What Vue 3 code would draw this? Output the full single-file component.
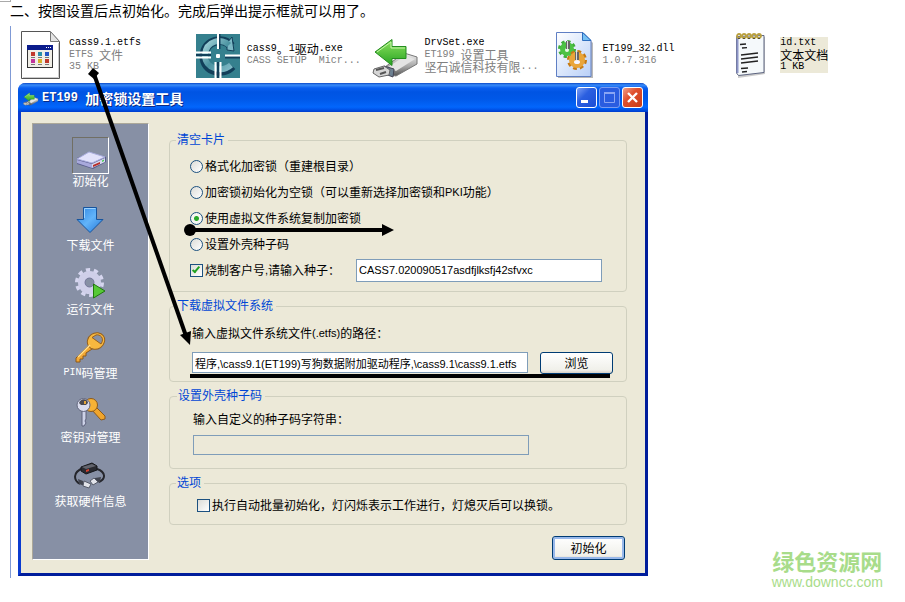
<template>
  <div class="page">
    <span class="corner"></span>
    <h1 class="step-title">二、按图设置后点初始化。完成后弹出提示框就可以用了。</h1>

    <main class="content">
      <ul class="files">
        <li v-for="file in files" :key="file.name" class="file" :class="{ selected: file.selected }">
          <svg v-if="file.icon === 'etfs'" class="file-icon" viewBox="0 0 48 48">
            <path d="M5.500 .5H34l9.500 10V47.500H5.500Z" fill="#fff" stroke="#555" />
            <path d="M34.500 .5V10.500H43.500Z" fill="#e4e4e4" stroke="#777" />
            <path d="M7 46.500H42.500V12" fill="none" stroke="#ccc" />
            <rect x="11.500" y="14.500" width="25" height="22" fill="#f0eee6" stroke="#333" />
            <rect x="11" y="14" width="26" height="5" fill="#0b1c8c" />
            <path d="M30 16.500h1m1 0h1m1 0h1" stroke="#fff" />
            <g v-for="(color, i) in dotColors" :key="i">
              <rect :x="15 + (i % 3) * 7" :y="i < 3 ? 21 : 28" width="4" height="4" :fill="color" />
              <rect :x="15 + (i % 3) * 7" :y="i < 3 ? 26 : 33" width="4" height="1" fill="#777" />
            </g>
          </svg>

          <svg v-else-if="file.icon === 'cass'" class="file-icon" viewBox="0 0 48 48">
            <defs>
              <linearGradient id="cassLetter" x1="0" y1="0" x2="1" y2="1">
                <stop offset="0" stop-color="#a4d3da" />
                <stop offset=".5" stop-color="#4b93a1" />
                <stop offset="1" stop-color="#7fbac6" />
              </linearGradient>
            </defs>
            <rect x="2" y="3" width="44" height="44" fill="#35808e" />
            <path d="M37 15C30 6 11 8 10 25C10 42 30 44 38 35" fill="none" stroke="#123f5a" stroke-width="9" />
            <path d="M33 12 38 6 40 20 33 19Z" fill="#7cb9c5" stroke="#123f5a" />
            <path d="M35 14C28 7 12 9 11 24C11 38 28 42 37 34" fill="none" stroke="url(#cassLetter)" stroke-width="6" />
            <path d="M25.500 3V18M24 31V47M2 24H17M31 26.500H46" stroke="#123f5a" stroke-width="2" />
            <path d="M24 3V18M2 21.500H17M2 26.500H17M31 24.500H46M21.500 31V47M26.500 31V47" stroke="#fff" stroke-width="2" />
            <rect x="22" y="23" width="4" height="4" rx="1" fill="#fff" />
          </svg>

          <svg v-else-if="file.icon === 'drvset'" class="file-icon" viewBox="0 0 48 48">
            <use href="#usbArrow" />
          </svg>

          <svg v-else-if="file.icon === 'dll'" class="file-icon" viewBox="0 0 48 48">
            <defs>
              <linearGradient id="dllPaper" x1="0" y1="0" x2="1" y2="1">
                <stop offset="0" stop-color="#fff" />
                <stop offset="1" stop-color="#b9d0f8" />
              </linearGradient>
            </defs>
            <path d="M9 3H35l9 9V47H9Z" fill="#8b8b8b" opacity=".6" />
            <path d="M7.500 1.500H34l8 8V45.500H7.500Z" fill="url(#dllPaper)" stroke="#5f7fc4" />
            <path d="M33.500 1.500V9.500H42Z" fill="#76c1f3" stroke="#2e6fc0" />
            <circle cx="18" cy="18" r="7" fill="none" stroke="#3fae3a" stroke-width="4" stroke-dasharray="3 2.500" />
            <circle cx="18" cy="18" r="7" fill="#4cc244" />
            <circle cx="18" cy="19" r="2" fill="#e8fbe6" />
            <circle cx="28" cy="29" r="8" fill="none" stroke="#c67a14" stroke-width="4" stroke-dasharray="3.500 2.800" />
            <circle cx="28" cy="29" r="8" fill="#e9a53a" />
            <ellipse cx="28" cy="31" rx="3" ry="2" fill="#f4f4ff" />
            <path d="M19 10V18M28 21V29" stroke="#666" stroke-width="4" />
            <path d="M18.500 10V18M27.500 21V29" stroke="#ddd" stroke-width="1" />
          </svg>

          <svg v-else class="file-icon" viewBox="0 0 48 48">
            <path d="M11 6H38V43L11 47Z" fill="#999" opacity=".5" />
            <path d="M9.500 5.500 37 4.500V41.500L11.500 44.500 9.500 42Z" fill="#f5f9fb" stroke="#5c6480" />
            <path d="M10.500 6V42" stroke="#8d95c7" stroke-width="2" />
            <path d="M13 13.500l6-.5M15 17l5-.4M14 24l17-2M14 28l17-2M14 32l17-2M14 37.500l7-.5M15 41l5-.5" stroke="#222" stroke-width="1.300" />
            <g fill="none" stroke="#b9a040" stroke-width="1.800">
              <circle v-for="n in 5" :key="n" :cx="7 + n * 5" cy="5" r="2" />
            </g>
            <path d="M12 7v1m5-1v1m5-1v1m5-1v1m5-1v1" stroke="#333" stroke-width="1.500" />
          </svg>

          <div class="file-text">
            <p v-for="(line, i) in [file.name, ...file.info]" :key="i" :class="{ info: i > 0 }">
              <MixedText :text="line" />
            </p>
          </div>
        </li>
      </ul>

      <section class="dialog">
        <header class="title-bar">
          <svg class="title-icon" viewBox="0 0 48 48"><use href="#usbArrow" /></svg>
          <h2><MixedText text="ET199 加密锁设置工具" /></h2>
          <div class="window-buttons">
            <button type="button" aria-label="最小化">
              <svg viewBox="0 0 19 19"><rect x="4" y="12" width="7" height="3" fill="#fff" /></svg>
            </button>
            <button type="button" class="maximize" aria-label="最大化" disabled>
              <svg viewBox="0 0 19 19">
                <path d="M4.500 5V14.500H14.500V5M4 5H15" fill="none" stroke="#8aa5f4" />
                <path d="M4 5H15" stroke="#8aa5f4" stroke-width="2" />
              </svg>
            </button>
            <button type="button" class="close" aria-label="关闭">
              <svg viewBox="0 0 19 19">
                <path d="M5 5 14 14M14 5 5 14" stroke="#fff" stroke-width="2.400" />
              </svg>
            </button>
          </div>
        </header>

        <div class="dialog-body">
          <nav class="sidebar">
            <button
              v-for="item in menu"
              :key="item.icon"
              type="button"
              class="menu-item"
              :class="{ active: item.icon === current }"
              @click="current = item.icon"
            >
              <span class="menu-icon">
                <svg v-if="item.icon === 'drive'" viewBox="0 0 32 32">
                  <path d="M2 18 14 13 31 17V22L18 29 2 24Z" fill="#5a5d8c" />
                  <path d="M2 19 14 12 30 17 17 23Z" fill="#e2e2fb" stroke="#aaaedf" />
                  <path d="M2 20 17 24V28L2 23Z" fill="#a8a9dc" />
                  <path d="M17 24 30 18V22L17 28Z" fill="#d7d8ee" />
                  <path d="M18 25 25 22V24L18 27Z" fill="#b92f28" />
                  <path d="M27 20.500 29 19.500V21L27 22Z" fill="#46cf51" />
                </svg>

                <svg v-else-if="item.icon === 'download'" viewBox="0 0 32 32">
                  <defs>
                    <linearGradient id="blueArrow" x1="0" y1="0" x2="1" y2="1">
                      <stop offset="0" stop-color="#2d83e0" />
                      <stop offset=".5" stop-color="#62b4fa" />
                      <stop offset="1" stop-color="#2375d6" />
                    </linearGradient>
                  </defs>
                  <path d="M9.500 3.500H22.500V15.500H29L16 28.500 3 15.500H9.500Z" fill="url(#blueArrow)" stroke="#17549d" />
                  <path d="M10.500 14V4.500H21.500" fill="none" stroke="#9cd3ff" />
                </svg>

                <svg v-else-if="item.icon === 'run'" viewBox="0 0 32 32">
                  <circle cx="15.500" cy="14.500" r="12" fill="none" stroke="#d6d6ef" stroke-width="5" stroke-dasharray="4 3.540" />
                  <circle cx="15.500" cy="14.500" r="8" fill="none" stroke="#cfcfe9" stroke-width="7" />
                  <circle cx="15.500" cy="14.500" r="4.500" fill="#8790a5" stroke="#77799d" />
                  <path d="M19.500 16V30L31 23Z" fill="#56c936" stroke="#21770f" />
                </svg>

                <svg v-else-if="item.icon === 'pin'" viewBox="0 0 32 32">
                  <path d="M16 11 1 26V30H5V27H8V24H11V21L20 15Z" fill="#f3a935" stroke="#8b591b" />
                  <ellipse cx="21" cy="9" rx="9" ry="8" transform="rotate(-35 21 9)" fill="#f8b83f" stroke="#95601e" />
                  <path d="M17 5.500 26 12C30 6 25 2 21 3Z" fill="#8790a5" stroke="#95601e" />
                  <path d="M15 13 3 25" stroke="#ffe293" stroke-width="1.500" />
                </svg>

                <svg v-else-if="item.icon === 'keys'" viewBox="0 0 32 32">
                  <path d="M17 13 27 24 31 23V20L22 11Z" fill="#f0a52c" stroke="#8b591b" />
                  <circle cx="17" cy="9" r="6.500" fill="#f6b236" stroke="#8b591b" />
                  <path d="M8 14V30H10L12 27 11 25 12 23V14Z" fill="#cdd2e8" stroke="#5d617b" />
                  <circle cx="9.500" cy="9" r="6.500" fill="#d9dced" stroke="#63677f" />
                  <path d="M5 7C7 1 14 3 14 7L12 9H7Z" fill="#4b4a50" />
                  <path d="M11 5v3" stroke="#e4a63a" stroke-width="2" />
                </svg>

                <svg v-else viewBox="0 0 32 32">
                  <path d="M9 8C-1 12-1 20 6 24M23 9C32 12 32 19 25 22" fill="none" stroke="#25262c" stroke-width="2" />
                  <path d="M7 7 18 3 23 6V10L12 14 7 11Z" fill="#292a30" stroke="#16171b" />
                  <path d="M8 7 18 4 22 6 12 9Z" fill="#62646d" />
                  <path d="M12 10 15 9V11L12 12Z" fill="#d43f2e" />
                  <path d="M4 19 9 21 11 26 5 24ZM27 17 21 18 18 24 26 22Z" fill="#41444e" />
                  <path d="M10 21 17 24 15 28 9 26ZM20 18 16 21 19 25 24 22Z" fill="#e2e4ea" stroke="#565b69" />
                </svg>
              </span>
              <span class="menu-label"><MixedText :text="item.label" /></span>
            </button>
          </nav>

          <form class="panel" @submit.prevent>
            <fieldset class="group clear-card">
              <legend>清空卡片</legend>
              <label v-for="mode in modes" :key="mode.value" class="option">
                <input v-model="selectedMode" type="radio" name="mode" :value="mode.value" />
                <MixedText :text="mode.label" />
              </label>
              <div class="option seed">
                <label class="option">
                  <input v-model="burnCustomer" type="checkbox" />
                  <MixedText text="烧制客户号,请输入种子：" />
                </label>
                <input v-model="seed" class="text-input" type="text" aria-label="种子" />
              </div>
            </fieldset>

            <fieldset class="group file-system">
              <legend>下载虚拟文件系统</legend>
              <label class="field-label" for="path"><MixedText text="输入虚拟文件系统文件(.etfs)的路径：" /></label>
              <div class="path-row">
                <input id="path" v-model="path" class="text-input" type="text" />
                <button type="button" class="xp-button">浏览</button>
              </div>
            </fieldset>

            <fieldset class="group shell-seed">
              <legend>设置外壳种子码</legend>
              <label class="field-label" for="shell">输入自定义的种子码字符串：</label>
              <input id="shell" class="text-input" type="text" disabled />
            </fieldset>

            <fieldset class="group batch">
              <legend>选项</legend>
              <label class="option">
                <input v-model="batch" type="checkbox" />
                <MixedText text="执行自动批量初始化，灯闪烁表示工作进行，灯熄灭后可以换锁。" />
              </label>
            </fieldset>

            <button type="submit" class="xp-button default">初始化</button>
          </form>
        </div>
      </section>
    </main>

    <!-- hand-drawn arrows pointing at the settings -->
    <svg class="marks" width="660" height="400" viewBox="0 0 660 400">
      <defs>
        <linearGradient id="greenArrow" x1="0" y1="0" x2="0" y2="1">
          <stop offset="0" stop-color="#8ee35f" />
          <stop offset="1" stop-color="#27a322" />
        </linearGradient>
        <linearGradient id="metal" x1="0" y1="0" x2="0" y2="1">
          <stop offset="0" stop-color="#f2f2f2" />
          <stop offset=".6" stop-color="#a4a4a4" />
          <stop offset="1" stop-color="#555" />
        </linearGradient>
        <g id="usbArrow">
          <path d="M13 36 32 22 45 26V33L24 45 14 43Z" fill="url(#metal)" stroke="#777" />
          <path d="M16 36 33 25 43 28 24 40Z" fill="#e4e4e4" />
          <path d="M12 35 22 38 21 46 13 43Z" fill="#6d8192" stroke="#445" />
          <path d="M2 38 12 35 18 39 17 44 7 46 1 42Z" fill="#d5d5d5" stroke="#666" />
          <path d="M4 39 12 37M8 43 14 41" stroke="#555" stroke-width="2" />
          <path d="M3 21 20 8.500V15.500H34V27.500H20V34.500Z" fill="url(#greenArrow)" stroke="#258d20" />
          <path d="M5 21 19 11V17H33" fill="none" stroke="#c4f5a6" />
        </g>
      </defs>
      <path d="M94 74 186 336" stroke="#000" stroke-width="4" />
      <path d="M93 68 99 73 94 79 88 74Z" />
      <path d="M190 345 180 335 191 331Z" />
      <circle cx="190" cy="230" r="6" />
      <path d="M190 230H384" stroke="#000" stroke-width="4" />
      <path d="M394 230 382 224V236Z" />
      <path d="M190 376H610" stroke="#000" stroke-width="4" />
    </svg>

    <a class="watermark" href="#">
      <strong>绿色资源网</strong>
      <span>www.downcc.com</span>
    </a>
  </div>
</template>

<script setup>
import { h, ref } from 'vue'

// Chinese glyphs are set larger than the latin ones next to them
const MixedText = (props) =>
  h('span', { class: 'mixed' }, props.text
    .split(/([\u3000-\u9fff\uff00-\uffef]+)/)
    .filter(Boolean)
    .map((run) => (/[\u3000-\uffef]/.test(run) ? h('span', { class: 'cjk' }, run) : run)))
MixedText.props = ['text']

const files = [
  { icon: 'etfs', name: 'cass9.1.etfs', info: ['ETFS 文件', '35 KB'] },
  { icon: 'cass', name: 'cass9。1驱动.exe', info: ['CASS SETUP  Micr...'] },
  { icon: 'drvset', name: 'DrvSet.exe', info: ['ET199 设置工具', '坚石诚信科技有限...'] },
  { icon: 'dll', name: 'ET199_32.dll', info: ['1.0.7.316'] },
  { icon: 'txt', name: 'id.txt', info: ['文本文档', '1 KB'], selected: true }
]

const dotColors = ['#c0392b', '#2a8fa8', '#2456c4', '#c2359b', '#d8b02a', '#c0392b']

const menu = [
  { icon: 'drive', label: '初始化' },
  { icon: 'download', label: '下载文件' },
  { icon: 'run', label: '运行文件' },
  { icon: 'pin', label: 'PIN码管理' },
  { icon: 'keys', label: '密钥对管理' },
  { icon: 'cable', label: '获取硬件信息' }
]

const modes = [
  { value: 'format', label: '格式化加密锁（重建根目录）' },
  { value: 'empty', label: '加密锁初始化为空锁（可以重新选择加密锁和PKI功能）' },
  { value: 'copy', label: '使用虚拟文件系统复制加密锁' },
  { value: 'shell', label: '设置外壳种子码' }
]

const current = ref('drive')
const selectedMode = ref('copy')
const burnCustomer = ref(true)
const batch = ref(false)
const seed = ref('CASS7.020090517asdfjlksfj42sfvxc')
const path = ref('程序,\\cass9.1(ET199)写狗数据附加驱动程序,\\cass9.1\\cass9.1.etfs')
</script>

<style>
body {
  background: #fff;
}

.mixed {
  display: flex;
  align-items: center;
  white-space: pre;
}

.mixed .cjk {
  font-family: "Noto Sans CJK SC", sans-serif;
  font-size: 12px;
}

h2 .mixed .cjk {
  font-size: 14px;
}
</style>

<style scoped>
.page {
  position: relative;
  box-sizing: border-box;
  min-height: 100vh;
  color: #000;
  font-family: "Liberation Sans", "Noto Sans CJK SC", sans-serif;
  font-size: 12px;
}

.page *,
.page *::before {
  box-sizing: border-box;
}

.corner {
  position: absolute;
  top: 0;
  left: 0;
  width: 11px;
  height: 2px;
  border-right: 1px solid #aaa;
  border-bottom: 1px solid #aaa;
}

.step-title {
  margin: 0;
  padding: 0 0 4px 10px;
  font-size: 14px;
  font-weight: 400;
  line-height: 22px;
}

.content {
  margin-left: 10px;
  padding: 5px 0 2px;
  border-left: 1px solid #7f9ad6;
}

.files {
  display: grid;
  grid-template-columns: repeat(5, minmax(0, 178px));
  margin: 0 0 4px;
  padding: 0 0 0 5px;
  list-style: none;
}

.file {
  display: flex;
  align-items: center;
  gap: 5px;
  height: 48px;
}

.file-icon {
  flex: none;
  width: 48px;
  height: 48px;
}

.file-text {
  font-family: "Liberation Mono", "Noto Sans CJK SC", monospace;
  font-size: 10px;
  line-height: 12px;
}

.file-text p {
  margin: 0;
  height: 12px;
}

.file-text .info {
  color: #808080;
}

.selected .file-text {
  background: #ece9d8;
}

.selected .file-text .info {
  color: #000;
}

.dialog {
  max-width: 630px;
  margin-left: 7px;
  border: 3px solid #0a3bd0;
  border-top: 0;
  border-right-color: #001d9c;
  border-bottom-color: #001d9c;
  border-radius: 8px 8px 0 0;
  background: #ece9d8;
}

.title-bar {
  display: flex;
  align-items: center;
  height: 29px;
  margin: 0 -3px;
  padding: 0 5px;
  border-radius: 7px 7px 0 0;
  background: linear-gradient(#0a48c8 0, #3a8cf8 2px, #0a5ff0 5px, #0054e3 9px, #0058e8 16px, #0266fc 24px, #0058ee 26px, #003ccc 29px);
}

.title-icon {
  width: 16px;
  height: 16px;
  margin-right: 3px;
}

.title-bar h2 {
  flex: 1;
  margin: 0;
  color: #fff;
  font-family: "Liberation Mono", "Noto Sans CJK SC", monospace;
  font-size: 12px;
  font-weight: 700;
  line-height: 16px;
  text-shadow: 1px 1px #0a2a85;
}

.window-buttons {
  display: flex;
  gap: 2px;
}

.window-buttons button {
  width: 21px;
  height: 21px;
  padding: 0;
  border: 1px solid #fff;
  border-radius: 3px;
  background: linear-gradient(135deg, #7b9ff5, #2b5fe0 40%, #1c4fd6);
}

.window-buttons svg {
  display: block;
  width: 19px;
  height: 19px;
}

.window-buttons .maximize {
  border-color: #7b9cf0;
  background: #2a5ce0;
}

.window-buttons .close {
  background: linear-gradient(135deg, #f0a08a, #e0502e 40%, #c83c18);
}

.dialog-body {
  display: flex;
  gap: 20px;
  padding: 11px 18px 13px 11px;
}

.sidebar {
  display: flex;
  flex: none;
  flex-direction: column;
  align-items: center;
  gap: 13px;
  width: 117px;
  padding-top: 13px;
  border: 1px solid #fff;
  border-top-color: #aca899;
  border-left-color: #aca899;
  background: #8790a5;
}

.menu-item {
  display: flex;
  flex-direction: column;
  align-items: center;
  padding: 0;
  border: 0;
  background: none;
  color: #fff;
  font-family: "Liberation Mono", "Noto Sans CJK SC", monospace;
  font-size: 10px;
  line-height: 14px;
}

.menu-icon {
  display: flex;
  align-items: center;
  justify-content: center;
  width: 37px;
  height: 37px;
  border: 1px solid transparent;
}

.active .menu-icon {
  border-color: #716f64 #fff #fff #716f64;
}

.menu-icon svg {
  width: 32px;
  height: 32px;
}

.menu-label {
  height: 14px;
}

.panel {
  display: flex;
  flex: 1;
  flex-direction: column;
  gap: 7px;
  min-width: 0;
  padding-top: 10px;
  font-size: 11px;
}

.group {
  display: flex;
  flex-direction: column;
  min-width: 0;
  margin: 0;
  border: 1px solid #d0d0bf;
  border-radius: 4px;
}

.group legend {
  padding: 0 3px 0 1px;
  color: #0046d5;
  font-size: 12px;
  line-height: 14px;
}

.clear-card {
  padding: 6px 24px 8px 20px;
}

.clear-card legend {
  margin-left: -14px;
}

.file-system {
  padding: 13px 13px 7px 22px;
}

.file-system legend,
.shell-seed legend {
  margin-left: -16px;
}

.shell-seed {
  align-items: flex-start;
  padding: 10px 13px 13px 23px;
}

.batch {
  padding: 5px 13px 9px 27px;
}

.batch legend {
  margin-left: -21px;
}

.option {
  display: flex;
  align-items: center;
  gap: 2px;
  height: 26px;
  line-height: 14px;
  white-space: nowrap;
}

.batch .option {
  height: 20px;
}

.seed {
  justify-content: space-between;
}

.seed .text-input {
  flex: 0 1 246px;
  height: 23px;
}

input[type="radio"],
input[type="checkbox"] {
  flex: none;
  width: 13px;
  height: 13px;
  margin: 0;
  border: 1px solid #1c5180;
  background: linear-gradient(135deg, #dcdcd7, #fff);
  appearance: none;
}

input[type="radio"] {
  border-radius: 50%;
}

input[type="radio"]:checked {
  background: radial-gradient(circle, #2aa82a 0 2px, #f6f6f2 3px);
}

input[type="checkbox"]:checked::before {
  display: block;
  width: 4px;
  height: 8px;
  margin: 0 0 0 3px;
  border: solid #21a121;
  border-width: 0 2px 2px 0;
  content: "";
  transform: rotate(40deg);
}

.text-input {
  min-width: 0;
  padding: 0 2px;
  border: 1px solid #7f9db9;
  border-radius: 0;
  background: #fff;
  color: #000;
  font-family: "Liberation Sans", "Noto Sans CJK SC", sans-serif;
  font-size: 11px;
}

.text-input:disabled {
  width: 336px;
  max-width: 100%;
  height: 20px;
  background: #ece9d8;
}

.field-label {
  height: 14px;
  margin-bottom: 12px;
  line-height: 14px;
}

.shell-seed .field-label {
  margin-bottom: 8px;
  font-size: 12px;
}

.path-row {
  display: flex;
  justify-content: space-between;
  gap: 12px;
}

.path-row .text-input {
  flex: 1;
  height: 21px;
}

.xp-button {
  width: 73px;
  height: 22px;
  padding: 0;
  border: 1px solid #003c74;
  border-radius: 3px;
  background: linear-gradient(#fff, #f0f0ea 85%, #d6d0c5);
  color: #000;
  font-family: "Noto Sans CJK SC", sans-serif;
  font-size: 12px;
  line-height: 18px;
}

.xp-button.default {
  align-self: flex-end;
  height: 24px;
  margin: 4px 2px 0 0;
  box-shadow: inset 0 0 0 2px #98b8ea;
}

.marks {
  position: absolute;
  top: 0;
  left: 0;
  pointer-events: none;
}

.watermark {
  position: absolute;
  right: 22px;
  bottom: 13px;
  display: flex;
  flex-direction: column;
  align-items: center;
  color: #a8dc8a;
  text-decoration: none;
}

.watermark strong {
  font-size: 22px;
  line-height: 24px;
}

.watermark span {
  font-size: 14px;
  line-height: 14px;
}
</style>
